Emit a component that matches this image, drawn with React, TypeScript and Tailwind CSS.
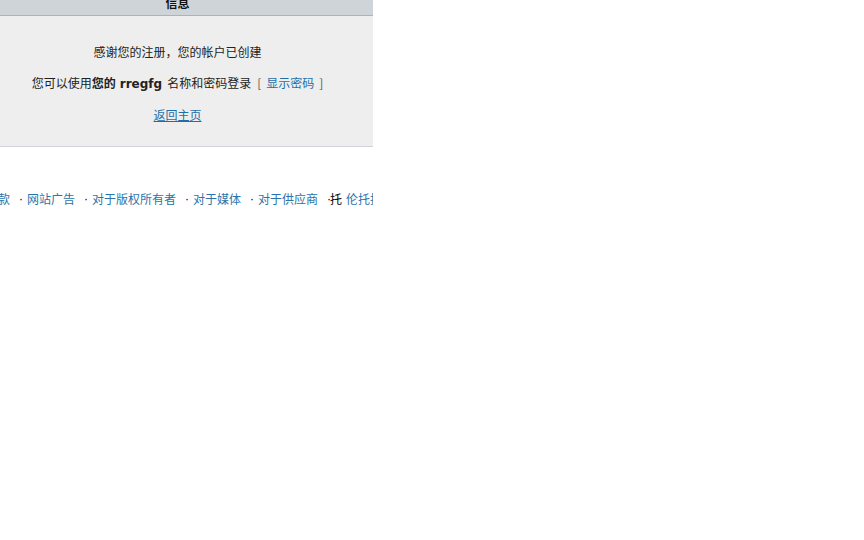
import React from 'react';

const cjk = '"Noto Sans CJK SC", "DejaVu Sans", sans-serif';

export default function App() {
  const footerLinks = ['网站广告', '对于版权所有者', '对于媒体', '对于供应商'];

  return (
    <div className="w-[373px] overflow-hidden text-[12px] text-[#222]" style={{ fontFamily: cjk }}>
      {/* 标题栏 */}
      <div className="h-[16px] overflow-hidden bg-[#cfd4d8] border-b border-[#adb3b8] pr-[18px] text-center">
        <div className="-mt-[4px] leading-[14px] font-bold text-[#111]">信息</div>
      </div>

      {/* 信息面板 */}
      <div className="bg-[#eeeeee] border-b border-[#d0d4d8] pt-[28px] pb-[23px] pr-[18px] flex flex-col items-center gap-[15px] leading-[16px]">
        <div>感谢您的注册，您的帐户已创建</div>
        <div className="whitespace-nowrap flex items-baseline">
          <span>您可以使用</span>
          <span className="font-bold">您的</span>
          <span className="font-bold ml-[4px]" style={{ fontFamily: '"DejaVu Sans", sans-serif' }}>rregfg</span>
          <span className="ml-[5px]">名称和密码登录</span>
          <span className="ml-[6px] text-[#555]">[</span>
          <a href="#" className="ml-[5px] text-[#1e6fa6]">显示密码</a>
          <span className="ml-[5px] text-[#555]">]</span>
        </div>
        <a href="#" className="text-[#1e6fa6] underline">返回主页</a>
      </div>

      {/* 页脚链接 */}
      <div className="mt-[44px] leading-[16px] whitespace-nowrap flex -ml-[38px]">
        <a href="#" className="text-[#2a74ab] shrink-0">使用条款</a>
        {footerLinks.map((l) => (
          <React.Fragment key={l}>
            <span className="w-[17px] shrink-0 pl-[9px] text-black" style={{ fontFamily: '"Liberation Sans", sans-serif' }}>·</span>
            <a href="#" className="text-[#2a74ab] shrink-0">{l}</a>
          </React.Fragment>
        ))}
        <span className="w-[12px] shrink-0 pl-[9px] text-black" style={{ fontFamily: '"Liberation Sans", sans-serif' }}>·</span>
        <span className="text-black shrink-0">托</span>
        <a href="#" className="text-[#2a74ab] shrink-0 ml-[4px]">伦托托管服务</a>
      </div>
    </div>
  );
}
